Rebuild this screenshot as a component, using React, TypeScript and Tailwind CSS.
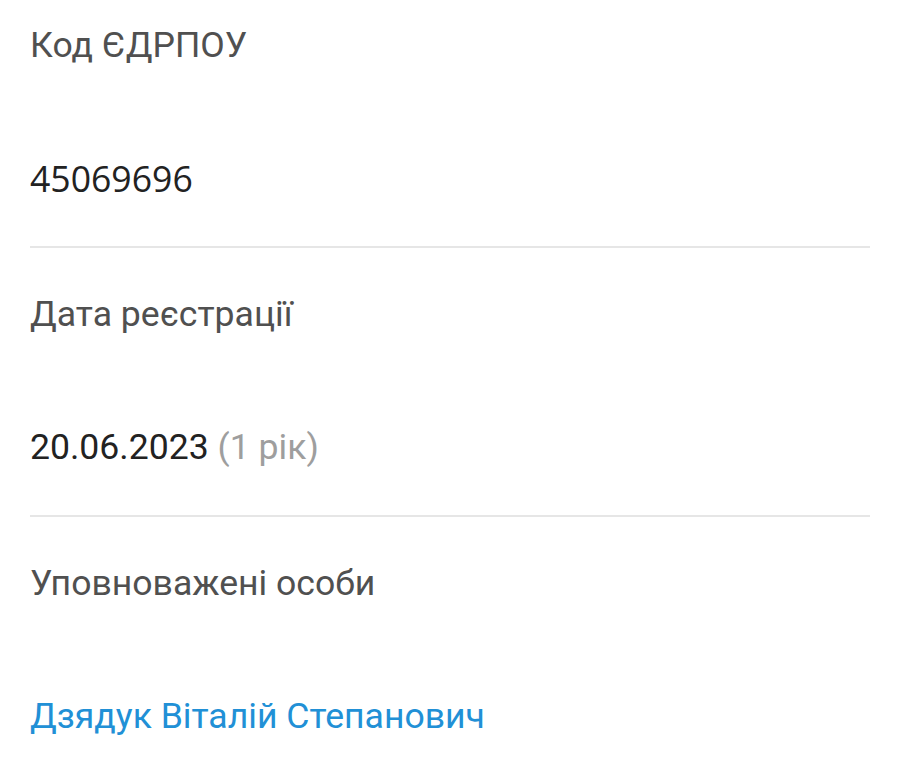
import React from 'react';

type Field = {
  label: string;
  value: React.ReactNode;
  last?: boolean;
};

const fields: Field[] = [
  {
    label: 'Код ЄДРПОУ',
    value: <span className="text-[#222222] font-['Open_Sans',sans-serif]">45069696</span>,
  },
  {
    label: 'Дата реєстрації',
    value: (
      <span className="text-[#222222]">
        20.06.2023 <span className="text-[#9e9e9e]">(1 рік)</span>
      </span>
    ),
  },
  {
    label: 'Уповноважені особи',
    value: <span className="text-[#2190d6]">Дзядук Віталій Степанович</span>,
    last: true,
  },
];

export default function App() {
  return (
    <div className="h-[779px] overflow-hidden bg-white font-['Roboto',sans-serif] text-[35.6px]">
      <div className="-mt-[21px] px-[30px]">
        {fields.map((f) => (
          <div
            key={f.label}
            className={f.last ? '' : 'border-b-2 border-[#e6e6e6]'}
          >
            <div className="flex h-[133px] items-center text-[#505050]">{f.label}</div>
            <div className="flex h-[134px] items-center">{f.value}</div>
          </div>
        ))}
      </div>
    </div>
  );
}
